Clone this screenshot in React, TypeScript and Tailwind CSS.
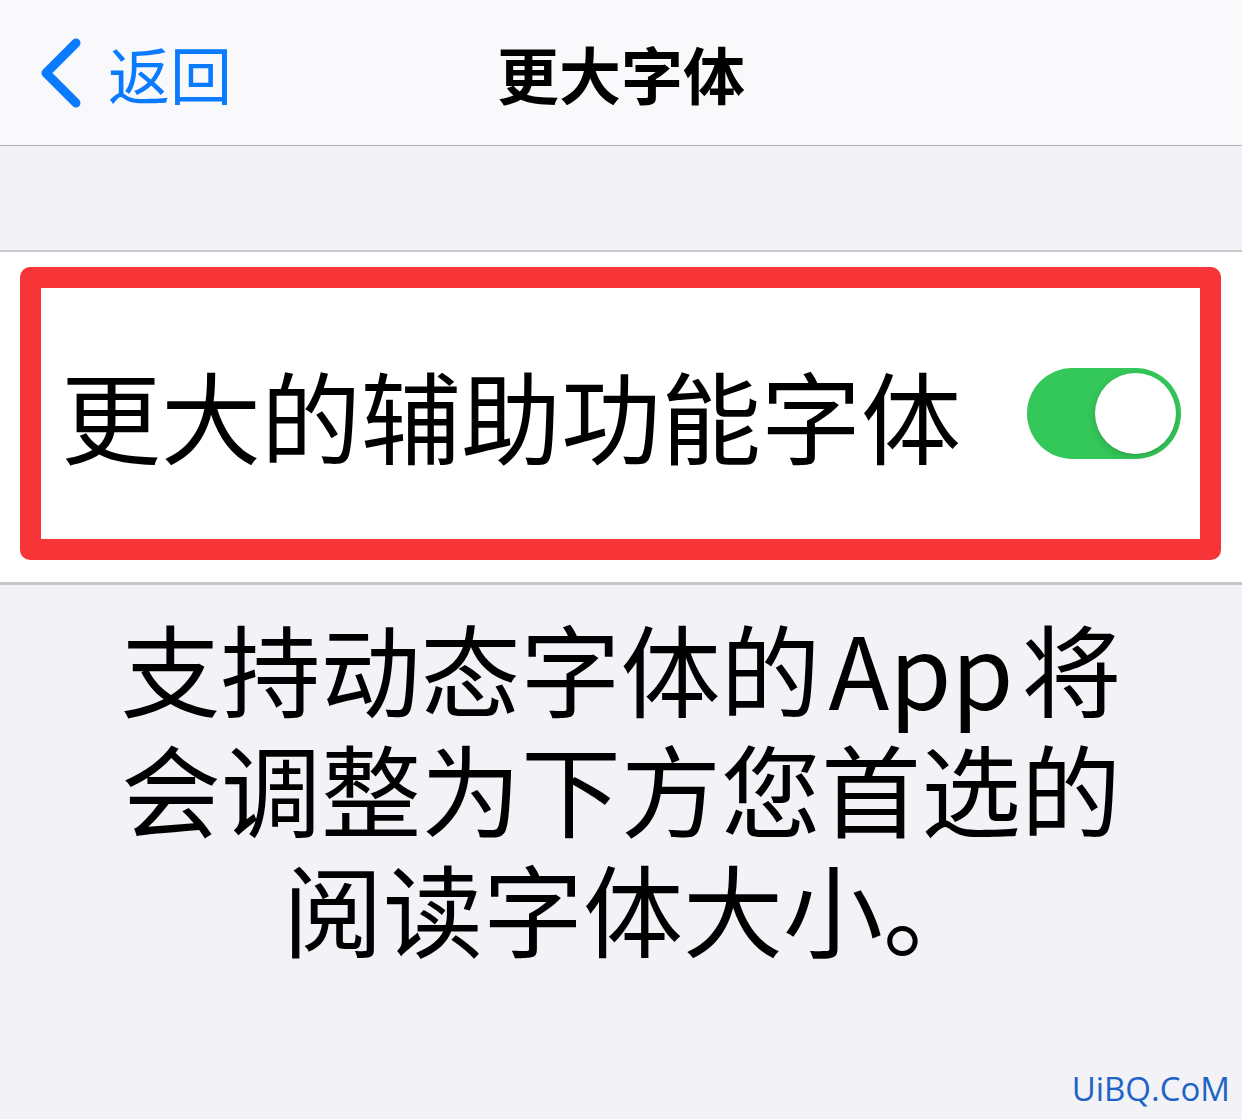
import React from 'react'

const cjk = { fontFamily: '"Noto Sans CJK SC", "Noto Sans", sans-serif' }

function Toggle() {
  return (
    <div className="relative h-[91px] w-[154px] rounded-full bg-[#34c759]">
      <div className="absolute right-[5px] top-[5px] h-[81px] w-[81px] rounded-full bg-white shadow-[0_3px_8px_rgba(0,0,0,0.15),0_1px_1px_rgba(0,0,0,0.1)]" />
    </div>
  )
}

const lines = ['支持动态字体的', '会调整为下方您首选的', '阅读字体大小。']

export default function App() {
  return (
    <div className="flex h-[1119px] w-[1242px] flex-col overflow-hidden bg-[#f2f2f7]" style={cjk}>
      {/* Nav bar */}
      <header className="relative flex h-[146px] items-center border-b border-[#b2b2b8] bg-[#f9f9fb]">
        <div className="flex items-center pl-[38px] text-[#0a7aff]">
          <svg width="46" height="72" viewBox="0 0 46 72" fill="none">
            <path d="M38 6 L8 36 L38 66" stroke="#0a7aff" strokeWidth="9" strokeLinecap="round" strokeLinejoin="round" />
          </svg>
          <span className="ml-[24px] text-[62px] leading-none">返回</span>
        </div>
        <h1 className="absolute left-1/2 -translate-x-1/2 text-[62px] font-semibold leading-none text-black">更大字体</h1>
      </header>

      {/* spacer */}
      <div className="h-[106px] border-b-2 border-[#c8c8cc]" />

      {/* Cell */}
      <section className="border-b-[3px] border-[#c8c8cc] bg-white pb-[22px] pl-[20px] pr-[21px] pt-[15px]">
        <div className="flex h-[293px] items-center justify-between rounded-[10px] border-[21px] border-[#f73437] pl-[20px] pr-[19px]">
          <span className="text-[100px] leading-none text-black">更大的辅助功能字体</span>
          <Toggle />
        </div>
      </section>

      {/* Footer text */}
      <div className="flex flex-col items-center pt-[22px] text-[100px] text-black">
        <div className="flex h-[120px] items-center leading-none">
          {lines[0]}
          <span className="mx-[8px]">App</span>将
        </div>
        <div className="flex h-[120px] items-center leading-none">{lines[1]}</div>
        <div className="flex h-[120px] items-center pl-[24px] leading-none">{lines[2]}</div>
      </div>

      <div className="mt-auto flex justify-end pb-[6px] pr-[12px]">
        <span className="text-[33px] text-[#1f63c6]" style={{ fontFamily: '"Open Sans", sans-serif' }}>UiBQ.CoM</span>
      </div>
    </div>
  )
}
